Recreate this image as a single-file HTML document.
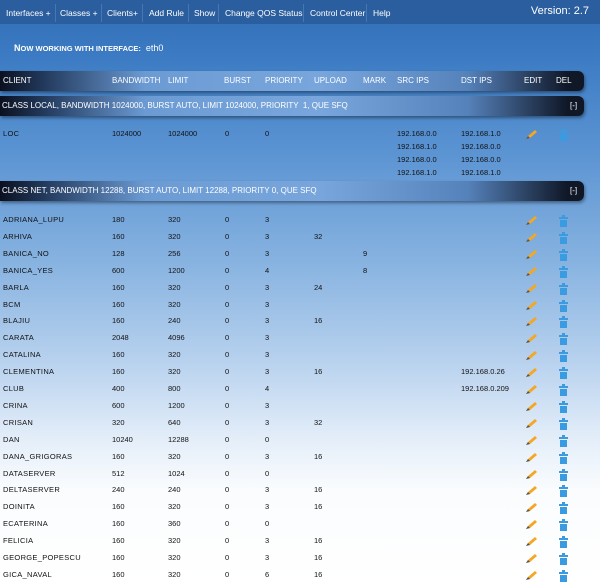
<!DOCTYPE html>
<html style="background:#fff"><head><meta charset="utf-8"><style>
*{margin:0;padding:0;box-sizing:border-box}
html,body{width:600px;height:582px;overflow:hidden}
body{position:relative;font-family:"Liberation Sans","DejaVu Sans",sans-serif;color:#111;
background:linear-gradient(180deg,#2f6db5 0px,#3d7cc4 60px,#5a93d2 150px,#86b2e0 260px,#b7d1ee 360px,#e4eef9 440px,#fafcfe 490px,#fff 582px) no-repeat;}
.menu{position:absolute;left:0;top:0;width:600px;height:24px;background:#2b5e9e;color:#fff;font-size:8.5px;}
.menu span{position:absolute;top:8px}
.menu i{position:absolute;top:4px;width:1px;height:18px;background:#4777b0}
.ver{position:absolute;right:11px;top:5px;font-size:11px;color:#fff}
.now{position:absolute;left:14px;top:43px;color:#fff;font-size:9px;font-weight:bold}
.bar{position:absolute;left:0;width:584px;height:20px;border-radius:0 6px 6px 0;color:#fff;font-size:8px;line-height:20px;padding-left:2px;
background:linear-gradient(90deg,#0b1020 0%,#243c60 8%,#6c9bd4 25%,#78a6dc 55%,#5682bb 80%,#101828 97%);box-shadow:1px 2px 3px rgba(0,0,0,.4)}
.bar span{position:absolute}
.r{position:absolute;left:0;width:600px;height:16.9px;font-size:7.5px;line-height:16.9px}
.r span{position:absolute}
.n{left:3px;letter-spacing:.3px}
.p{position:absolute;left:525px;top:3px}
.t{position:absolute;left:558px;top:3px}
</style></head><body>
<div class="menu">
<span style="left:6px">Interfaces +</span><i style="left:55px"></i>
<span style="left:60px">Classes +</span><i style="left:101px"></i>
<span style="left:107px">Clients+</span><i style="left:142px"></i>
<span style="left:149px">Add Rule</span><i style="left:188px"></i>
<span style="left:194px">Show</span><i style="left:218px"></i>
<span style="left:225px">Change QOS Status</span><i style="left:303px"></i>
<span style="left:310px">Control Center</span><i style="left:366px"></i>
<span style="left:373px">Help</span>
<div class="ver">Version: 2.7</div>
</div>
<div class="now">N<span style="font-size:7.5px">OW WORKING WITH INTERFACE:</span> &nbsp;<span style="font-weight:normal">eth0</span></div>
<div class="bar" style="top:71px"><span style="left:3px">CLIENT</span><span style="left:112px">BANDWIDTH</span><span style="left:168px">LIMIT</span><span style="left:224px">BURST</span><span style="left:265px">PRIORITY</span><span style="left:314px">UPLOAD</span><span style="left:363px">MARK</span><span style="left:397px">SRC IPS</span><span style="left:461px">DST IPS</span><span style="left:524px">EDIT</span><span style="left:556px">DEL</span></div>
<div class="bar" style="top:96px">CLASS LOCAL, BANDWIDTH 1024000, BURST AUTO, LIMIT 1024000, PRIORITY &nbsp;1, QUE SFQ<span style="left:570px">[-]</span></div>
<div class="r" style="top:126px"><span class="n">LOC</span><span style="left:112px">1024000</span><span style="left:168px">1024000</span><span style="left:225px">0</span><span style="left:265px">0</span><span style="left:397px">192.168.0.0</span><span style="left:461px">192.168.1.0</span><svg class="p" width="12" height="11"><path d="M1 10 L3 7 L10 1 L12 3 L5 9 Z" fill="#f5a623"/><path d="M1 10 L3 7 L5 9Z" fill="#555"/></svg><svg class="t" width="11" height="12"><rect x="1" y="2" width="9" height="2" fill="#3a9be0"/><rect x="4" y="0" width="3" height="2" fill="#3a9be0"/><rect x="2" y="5" width="7" height="7" fill="#3a9be0"/></svg></div>
<div class="r" style="top:139px"><span style="left:397px">192.168.1.0</span><span style="left:461px">192.168.0.0</span></div>
<div class="r" style="top:152px"><span style="left:397px">192.168.0.0</span><span style="left:461px">192.168.0.0</span></div>
<div class="r" style="top:165px"><span style="left:397px">192.168.1.0</span><span style="left:461px">192.168.1.0</span></div>
<div class="bar" style="top:181px">CLASS NET, BANDWIDTH 12288, BURST AUTO, LIMIT 12288, PRIORITY 0, QUE SFQ<span style="left:570px">[-]</span></div>
<div id="rows"></div>
<script>
var d=[["ADRIANA_LUPU",180,320,0,3,"","",""],["ARHIVA",160,320,0,3,32,"",""],["BANICA_NO",128,256,0,3,"",9,""],["BANICA_YES",600,1200,0,4,"",8,""],["BARLA",160,320,0,3,24,"",""],["BCM",160,320,0,3,"","",""],["BLAJIU",160,240,0,3,16,"",""],["CARATA",2048,4096,0,3,"","",""],["CATALINA",160,320,0,3,"","",""],["CLEMENTINA",160,320,0,3,16,"","192.168.0.26"],["CLUB",400,800,0,4,"","","192.168.0.209"],["CRINA",600,1200,0,3,"","",""],["CRISAN",320,640,0,3,32,"",""],["DAN",10240,12288,0,0,"","",""],["DANA_GRIGORAS",160,320,0,3,16,"",""],["DATASERVER",512,1024,0,0,"","",""],["DELTASERVER",240,240,0,3,16,"",""],["DOINITA",160,320,0,3,16,"",""],["ECATERINA",160,360,0,0,"","",""],["FELICIA",160,320,0,3,16,"",""],["GEORGE_POPESCU",160,320,0,3,16,"",""],["GICA_NAVAL",160,320,0,6,16,"",""]];
var h="",x=[112,168,225,265,314,363,461];
d.forEach(function(r,i){h+='<div class="r" style="top:'+(212+i*16.9)+'px"><span class="n">'+r[0]+'</span>';
for(var k=1;k<8;k++)h+='<span style="left:'+x[k-1]+'px">'+r[k]+'</span>';
h+='<svg class="p" width="12" height="11"><path d="M1 10 L3 7 L10 1 L12 3 L5 9 Z" fill="#f5a623"/><path d="M1 10 L3 7 L5 9Z" fill="#555"/></svg><svg class="t" width="11" height="12"><rect x="1" y="2" width="9" height="2" fill="#3a9be0"/><rect x="4" y="0" width="3" height="2" fill="#3a9be0"/><rect x="2" y="5" width="7" height="7" fill="#3a9be0"/></svg></div>';});
document.getElementById("rows").innerHTML=h;
</script>
</body></html>
